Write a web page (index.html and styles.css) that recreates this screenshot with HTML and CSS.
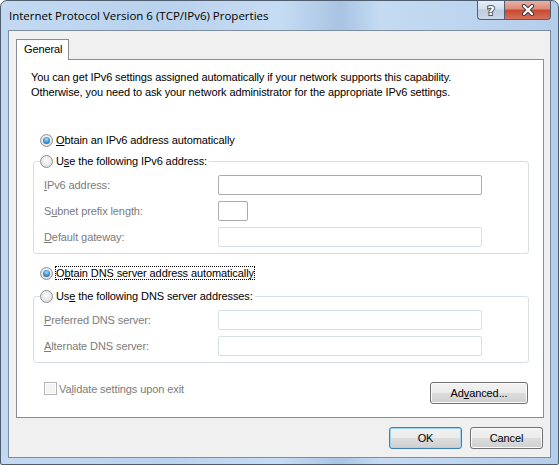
FILE: index.html
```html
<!DOCTYPE html>
<html lang="en">
<head>
<meta charset="UTF-8" />
<title>Internet Protocol Version 6 (TCP/IPv6) Properties</title>
<link rel="stylesheet" href="styles.css">
</head>
<body>

  <div class="window">
    <div class="titlebar">
      <span class="title">Internet Protocol Version 6 (TCP/IPv6) Properties</span>
      <div class="caption">
        <span class="cap-btn help">?</span>
        <span class="cap-btn close">
          <svg width="14" height="12" viewBox="0 0 14 12">
            <path d="M3 2 L11 10 M11 2 L3 10" stroke="#3b3f46" stroke-width="4.2" stroke-linecap="round" fill="none"/>
            <path d="M3 2 L11 10 M11 2 L3 10" stroke="#fff" stroke-width="2.2" stroke-linecap="round" fill="none"/>
          </svg>
        </span>
      </div>
    </div>

    <div class="client">
      <div class="tabs"><span class="tab">General</span></div>

      <div class="panel">
        <p class="intro">You can get IPv6 settings assigned automatically if your network supports this capability.<br>Otherwise, you need to ask your network administrator for the appropriate IPv6 settings.</p>

        <div class="option first"><span class="radio checked"></span><span><u>O</u>btain an IPv6 address automatically</span></div>

        <fieldset class="group">
          <legend class="option"><span class="radio"></span><span>U<u>s</u>e the following IPv6 address:</span></legend>
          <div class="field"><span class="label"><u>I</u>Pv6 address:</span><input class="box" type="text" disabled></div>
          <div class="field"><span class="label">S<u>u</u>bnet prefix length:</span><input class="box short" type="text" disabled></div>
          <div class="field"><span class="label"><u>D</u>efault gateway:</span><input class="box off" type="text" disabled></div>
        </fieldset>

        <div class="option dns"><span class="radio checked"></span><span class="focus">O<u>b</u>tain DNS server address automatically</span></div>

        <fieldset class="group dns-group">
          <legend class="option"><span class="radio"></span><span>Us<u>e</u> the following DNS server addresses:</span></legend>
          <div class="field"><span class="label"><u>P</u>referred DNS server:</span><input class="box off" type="text" disabled></div>
          <div class="field"><span class="label"><u>A</u>lternate DNS server:</span><input class="box off" type="text" disabled></div>
        </fieldset>

        <div class="panel-foot">
          <div class="check"><span class="checkbox"></span><span>Va<u>l</u>idate settings upon exit</span></div>
          <button class="btn wide" type="button">Ad<u>v</u>anced...</button>
        </div>
      </div>

      <div class="actions">
        <button class="btn default" type="button">OK</button>
        <button class="btn" type="button">Cancel</button>
      </div>
    </div>
  </div>

</body>
</html>
```

FILE: styles.css
```css
body {
  margin: 0;
  font-family: "Liberation Sans", Arial, sans-serif;
  font-size: 11px;
  letter-spacing: -0.1px;
  color: #000;
}
.window {
  box-sizing: border-box;
  width: 559px;
  height: 465px;
  border: 1px solid #4f5d6e;
  border-radius: 7px 7px 2px 2px;
  padding: 0 7px 6px;
  display: flex;
  flex-direction: column;
  background: linear-gradient(to right, #c2d9f1 0%, #b9d2ed 30%, #c6dcf3 50%, #a8c4e3 61%, #c4dbf2 68%, #bcd4ee 85%, #b4cdea 100%);
}
.titlebar {
  height: 29px;
  display: flex;
  align-items: flex-start;
}
.title {
  margin: 7px 0 0 1px;
  line-height: 16px;
  font-family: "Open Sans", sans-serif;
  font-size: 11.5px;
  letter-spacing: 0;
}
.caption {
  margin-left: auto;
  display: flex;
}
.cap-btn {
  box-sizing: border-box;
  height: 19px;
  border: 1px solid #4f5f73;
  border-top: none;
  display: flex;
  align-items: center;
  justify-content: center;
}
.help {
  width: 27px;
  border-right: none;
  border-radius: 0 0 0 4px;
  background: linear-gradient(#e6eef7, #d3deeb 45%, #bccbdd 50%, #cbd9e9);
  color: #fff;
  font: bold 13px "DejaVu Sans", sans-serif;
  -webkit-text-stroke: 2px #4b5564;
  paint-order: stroke fill;
}
.close {
  width: 47px;
  border-radius: 0 0 4px 0;
  background: linear-gradient(#eab0a3, #dd8a78 45%, #c9482e 50%, #d6705a);
}
.client {
  flex: 1;
  border: 1px solid #7d8ea3;
  background: #f0f0f0;
  padding: 8px 6px 0 7px;
  display: flex;
  flex-direction: column;
}
.tabs {
  display: flex;
  height: 20px;
}
.tab {
  box-sizing: border-box;
  width: 53px;
  height: 21px;
  padding-left: 7px;
  line-height: 19px;
  border: 1px solid #898c95;
  border-bottom: none;
  background: #fff;
  position: relative;
  z-index: 1;
}
.panel {
  box-sizing: border-box;
  height: 359px;
  border: 1px solid #898c95;
  background: #fff;
  padding-top: 10px;
}
.intro {
  margin: 0 0 0 14px;
  line-height: 15px;
}
.option {
  display: flex;
  align-items: center;
  height: 16px;
}
.option.first {
  margin: 32px 0 0 23px;
}
.radio {
  box-sizing: border-box;
  width: 13px;
  height: 13px;
  margin-right: 3px;
  border-radius: 50%;
  border: 1px solid #8d9196;
  background: radial-gradient(circle at 50% 40%, #fbfbfb 0%, #e8e8e8 55%, #d2d2d2 100%);
  display: flex;
  align-items: center;
  justify-content: center;
}
.radio.checked::after {
  content: "";
  width: 7px;
  height: 7px;
  border-radius: 50%;
  background: radial-gradient(circle at 50% 35%, #a6e0ff 0%, #4a9ad8 45%, #1d4f80 100%);
}
.group {
  min-width: 0;
  margin: 5px 14px 0 16px;
  padding: 0 0 6px;
  border: 1px solid #d5dfe5;
  border-radius: 3px;
}
.group legend {
  padding: 0 2px 0 0;
  margin-left: 6px;
}
.field {
  display: flex;
  align-items: center;
  height: 20px;
  margin-top: 6px;
  padding-left: 10px;
  color: #7b7b7b;
}
.label {
  width: 174px;
}
.box {
  box-sizing: border-box;
  width: 264px;
  height: 20px;
  margin: 0;
  padding: 0;
  border: 1px solid #ababab;
  border-radius: 2px;
  background: #fff;
}
.box.short {
  width: 30px;
}
.box.off {
  border-color: #d9dfe6;
}
.option.dns {
  margin: 11px 0 0 23px;
}
.focus {
  outline: 1px dotted #000;
}
.dns-group {
  margin-top: 7px;
}
.panel-foot {
  display: flex;
  align-items: flex-start;
  justify-content: space-between;
  margin: 19px 15px 0 27px;
}
.check {
  display: flex;
  align-items: center;
  height: 13px;
  color: #7b7b7b;
}
.checkbox {
  box-sizing: border-box;
  width: 13px;
  height: 13px;
  margin-right: 2px;
  border: 1px solid #b5b5b5;
  background: #f4f4f4;
  box-shadow: inset 0 0 0 1px #fdfdfd;
}
.btn {
  box-sizing: border-box;
  width: 73px;
  height: 22px;
  padding: 0;
  font: inherit;
  letter-spacing: inherit;
  color: #000;
  border: 1px solid #707070;
  border-radius: 3px;
  background: linear-gradient(#f2f2f2 0%, #ebebeb 50%, #dddddd 50%, #cfcfcf 100%);
  box-shadow: inset 0 0 0 1px #fbfbfb;
}
.btn.wide {
  width: 98px;
}
.btn.default {
  border-color: #3c7fb1;
  box-shadow: inset 0 0 0 1px #9fd5f3;
}
.actions {
  display: flex;
  justify-content: flex-end;
  gap: 8px;
  margin-top: 9px;
  padding-right: 1px;
}
```
